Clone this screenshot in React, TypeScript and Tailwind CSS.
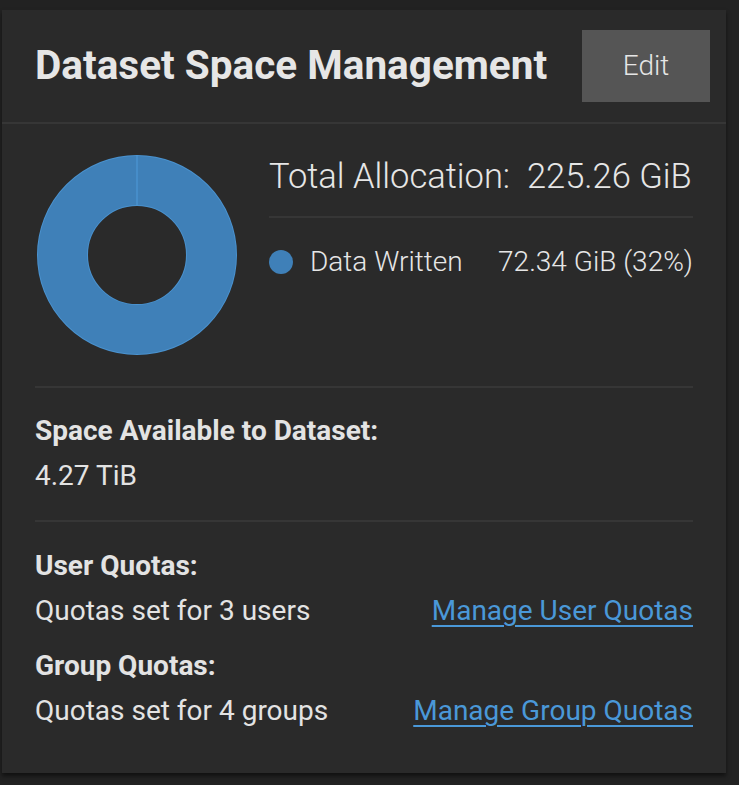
import React from "react";

const font = { fontFamily: "Roboto, 'Liberation Sans', sans-serif" };

function Donut() {
  // single slice (100% written within allocation view), small seam at top
  return (
    <svg width="202" height="202" viewBox="0 0 202 202" className="shrink-0">
      <circle cx="101" cy="101" r="74.5" fill="none" stroke="#4a92cf" strokeWidth="51" />
      <circle cx="101" cy="101" r="74.5" fill="none" stroke="#3f80b8" strokeWidth="49" />
      <line x1="101" y1="2" x2="101" y2="52" stroke="#4a92cf" strokeWidth="1.5" />
    </svg>
  );
}

function QuotaRow({ title, text, link }: { title: string; text: string; link: string }) {
  return (
    <div>
      <div className="h-[45px] flex items-center text-[28px] font-bold text-[#e3e3e3]">{title}</div>
      <div className="h-[45px] flex items-center justify-between text-[28px] text-[#e3e3e3]">
        <span>{text}</span>
        <a href="#" className="text-[#4a98d8] underline underline-offset-[5px] decoration-[1.5px]">
          {link}
        </a>
      </div>
    </div>
  );
}

export default function App() {
  return (
    <div className="min-h-screen bg-[#222222] pt-[10px] pl-[2px]" style={font}>
      <div className="w-[724px] h-[763px] bg-[#2a2a2a] shadow-[0_3px_4px_rgba(0,0,0,0.5)]">
        <div className="h-[114px] flex items-center justify-between pl-[33px] pr-[16px] border-b-2 border-[#363636]">
          <h2 className="text-[40.5px] font-bold text-[#e6e6e6] pb-[2px]">Dataset Space Management</h2>
          <button className="w-[128px] h-[72px] bg-[#555555] text-[#e6e6e6] text-[28px] font-light">Edit</button>
        </div>

        <div className="px-[33px]">
          <div className="flex items-start pt-[30px] pb-[30px] border-b-2 border-[#363636]">
            <div className="ml-[1px]">
              <Donut />
            </div>
            <div className="ml-[31px] flex-1">
              <div className="h-[46px] flex items-center text-[34.5px] font-light text-[#e6e6e6] whitespace-pre">
                Total Allocation:  225.26 GiB
              </div>
              <div className="mt-[16px] border-b-2 border-[#363636]" />
              <div className="mt-[23px] flex items-center text-[28px] text-[#e6e6e6] font-light">
                <span className="w-[24px] h-[24px] rounded-full bg-[#3f80b8] shrink-0" />
                <span className="ml-[17px]">Data Written</span>
                <span className="ml-auto">72.34 GiB (32%)</span>
              </div>
            </div>
          </div>

          <div className="pt-[18px] pb-[24px] border-b-2 border-[#363636]">
            <div className="h-[50px] flex items-center text-[28px] font-bold text-[#e3e3e3]">Space Available to Dataset:</div>
            <div className="h-[40px] flex items-center text-[28px] text-[#e3e3e3]">4.27 TiB</div>
          </div>

          <div className="pt-[21px]">
            <QuotaRow title="User Quotas:" text="Quotas set for 3 users" link="Manage User Quotas" />
            <div className="mt-[10px]">
              <QuotaRow title="Group Quotas:" text="Quotas set for 4 groups" link="Manage Group Quotas" />
            </div>
          </div>
        </div>
      </div>
    </div>
  );
}
